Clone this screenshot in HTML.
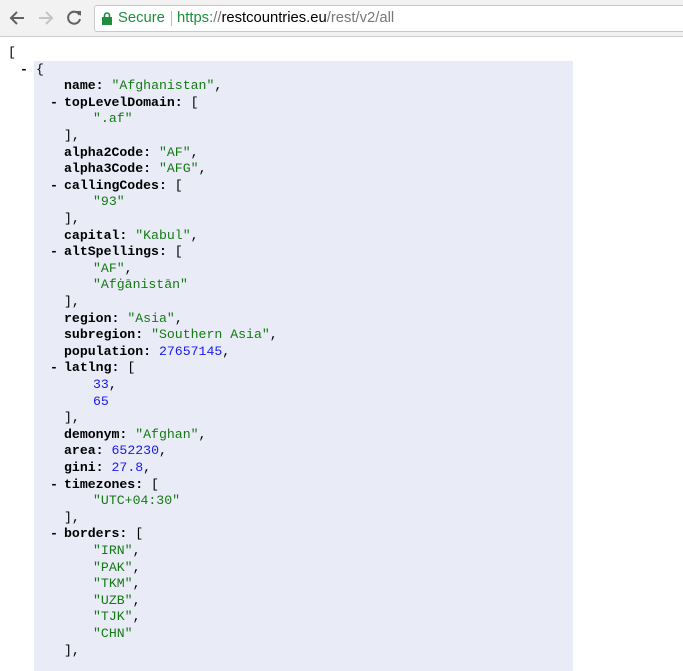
<!DOCTYPE html>
<html><head><meta charset="utf-8"><style>
body{margin:0;width:683px;height:662px;overflow:hidden;background:#fff;position:relative;font-family:"Liberation Mono",monospace;font-size:13.2px}
.bar{position:absolute;left:0;top:0;width:683px;height:36px;background:#f2f2f2;border-bottom:1px solid #ccc}
.url{position:absolute;left:94px;top:5px;width:600px;height:25px;background:#fff;border:1px solid #c8c8c8;border-radius:3px;font-family:"Liberation Sans",sans-serif;font-size:14.8px;line-height:25px}
.hl{position:absolute;left:34px;top:61px;width:539px;height:610px;background:#e9ebf7}
.l{position:absolute;line-height:16.6px;white-space:pre;color:#000}
b{font-weight:bold}
.s{color:#137a13}.n{color:#1a1aee}
.m{position:absolute;font-weight:bold;line-height:16.6px}
</style></head><body>
<div class="bar">
<svg style="position:absolute;left:8px;top:9px" width="18" height="18" viewBox="0 0 18 18"><path d="M16 9H3M9 3L3 9l6 6" stroke="#5f6368" stroke-width="2" fill="none"/></svg>
<svg style="position:absolute;left:37px;top:9px" width="18" height="18" viewBox="0 0 18 18"><path d="M2 9h13M9 3l6 6-6 6" stroke="#c4c4c4" stroke-width="2" fill="none"/></svg>
<svg style="position:absolute;left:65px;top:9px" width="18" height="18" viewBox="0 0 18 18"><path d="M14.5 6A6 6 0 1 0 15 10" stroke="#5f6368" stroke-width="2" fill="none"/><path d="M11 2h5v5z" fill="#5f6368"/></svg>
<div class="url"><svg style="position:absolute;left:7px;top:6px" width="10" height="13" viewBox="0 0 10 13"><rect x="0" y="5" width="10" height="8" fill="#1e8e3e"/><path d="M2.5 5V3.5a2.5 2.5 0 0 1 5 0V5" stroke="#1e8e3e" stroke-width="1.6" fill="none"/></svg><span style="position:absolute;left:23px;color:#1e8e3e">Secure</span><span style="position:absolute;left:76px;top:5px;width:1px;height:15px;background:#bbb"></span><span style="position:absolute;left:82px"><span style="color:#1e8e3e">https:</span><span style="color:#777">//</span><span style="color:#000">restcountries.eu</span><span style="color:#777">/rest/v2/all</span></span></div>
</div>
<div class="hl"></div>
<div id="c"></div>
<script>
var L=[
[8,'['],[36,'{',20],
[64,'<b>name:</b> <span class=s>"Afghanistan"</span>,'],
[64,'<b>topLevelDomain:</b> [',50],[93,'<span class=s>".af"</span>'],[64,'],'],
[64,'<b>alpha2Code:</b> <span class=s>"AF"</span>,'],
[64,'<b>alpha3Code:</b> <span class=s>"AFG"</span>,'],
[64,'<b>callingCodes:</b> [',50],[93,'<span class=s>"93"</span>'],[64,'],'],
[64,'<b>capital:</b> <span class=s>"Kabul"</span>,'],
[64,'<b>altSpellings:</b> [',50],[93,'<span class=s>"AF"</span>,'],[93,'<span class=s>"Afġānistān"</span>'],[64,'],'],
[64,'<b>region:</b> <span class=s>"Asia"</span>,'],
[64,'<b>subregion:</b> <span class=s>"Southern Asia"</span>,'],
[64,'<b>population:</b> <span class=n>27657145</span>,'],
[64,'<b>latlng:</b> [',50],[93,'<span class=n>33</span>,'],[93,'<span class=n>65</span>'],[64,'],'],
[64,'<b>demonym:</b> <span class=s>"Afghan"</span>,'],
[64,'<b>area:</b> <span class=n>652230</span>,'],
[64,'<b>gini:</b> <span class=n>27.8</span>,'],
[64,'<b>timezones:</b> [',50],[93,'<span class=s>"UTC+04:30"</span>'],[64,'],'],
[64,'<b>borders:</b> [',50],[93,'<span class=s>"IRN"</span>,'],[93,'<span class=s>"PAK"</span>,'],[93,'<span class=s>"TKM"</span>,'],[93,'<span class=s>"UZB"</span>,'],[93,'<span class=s>"TJK"</span>,'],[93,'<span class=s>"CHN"</span>'],[64,'],']
];
var h='';L.forEach(function(a,i){var t=45+i*16.6;h+='<div class="l" style="left:'+a[0]+'px;top:'+t+'px">'+a[1]+'</div>';if(a[2])h+='<div class="m" style="left:'+a[2]+'px;top:'+t+'px">-</div>';});
document.getElementById('c').innerHTML=h;
</script>
</body></html>
